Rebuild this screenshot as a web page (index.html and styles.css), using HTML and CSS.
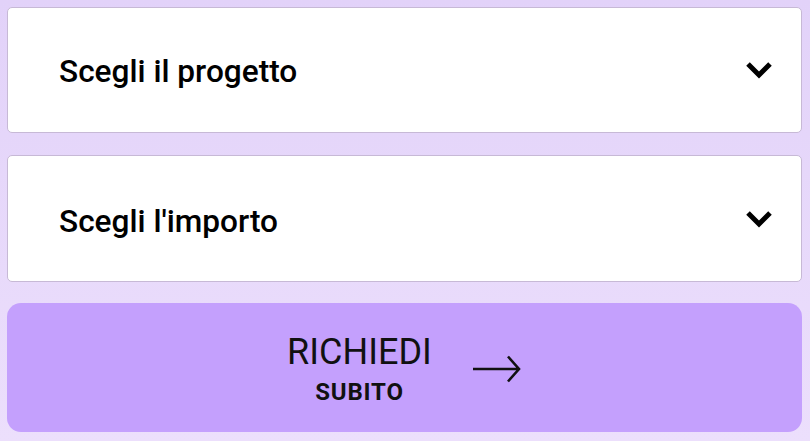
FILE: index.html
```html
<!DOCTYPE html>
<html lang="it">
<head>
<meta charset="utf-8">
<link rel="stylesheet" href="styles.css">
</head>
<body>
<main class="form">
  <div class="select">
    <span class="label">Scegli il progetto</span>
    <svg class="chev" viewBox="0 0 28 20" width="28" height="20"><path d="M3 4 L14 15 L25 4" fill="none" stroke="#000" stroke-width="5"/></svg>
  </div>
  <div class="select select-second">
    <span class="label">Scegli l'importo</span>
    <svg class="chev" viewBox="0 0 28 20" width="28" height="20"><path d="M3 4 L14 15 L25 4" fill="none" stroke="#000" stroke-width="5"/></svg>
  </div>
  <button class="cta">
    <span class="cta-text">
      <span class="cta-main">RICHIEDI</span>
      <span class="cta-sub">SUBITO</span>
    </span>
    <svg class="arrow" viewBox="0 0 50 28" width="50" height="28"><path d="M1 14 H47 M36 1.5 L47 14 L36 26.5" fill="none" stroke="#111" stroke-width="2.6" stroke-linejoin="miter"/></svg>
  </button>
</main>
</body>
</html>
```
FILE: styles.css
```css
html, body {
  margin: 0;
  height: 100%;
}
body {
  background: linear-gradient(#e2d2f9, #ecdffc);
  font-family: Roboto, "Liberation Sans", sans-serif;
  color: #000;
}
.form {
  padding: 7px 8px 9px 7px;
  display: flex;
  flex-direction: column;
  gap: 22px;
}
.select {
  height: 126px;
  box-sizing: border-box;
  background: #fff;
  border: 1.5px solid #c7b9d6;
  border-radius: 5px;
  display: flex;
  align-items: center;
  justify-content: space-between;
  padding: 0 28px 0 51px;
}
.select-second {
  height: 127px;
}
.label {
  font-size: 31.6px;
  font-weight: 500;
  margin-top: 3px;
}
.select-second .label {
  margin-top: 5px;
}
.chev {
  display: block;
}
.cta {
  height: 129px;
  margin-top: -1px;
  border: none;
  border-radius: 14px;
  background: #c4a0fd;
  display: flex;
  align-items: center;
  justify-content: center;
  gap: 40px;
  font-family: inherit;
  color: #111;
  padding: 0;
  cursor: pointer;
}
.cta-text {
  display: flex;
  flex-direction: column;
  align-items: center;
  margin-top: 6px;
}
.cta-main {
  font-size: 36px;
  font-weight: 400;
  line-height: 42px;
}
.cta-sub {
  font-size: 24px;
  font-weight: 700;
  line-height: 38px;
  letter-spacing: 0.8px;
}
.arrow {
  display: block;
  margin-top: 2px;
}
```
